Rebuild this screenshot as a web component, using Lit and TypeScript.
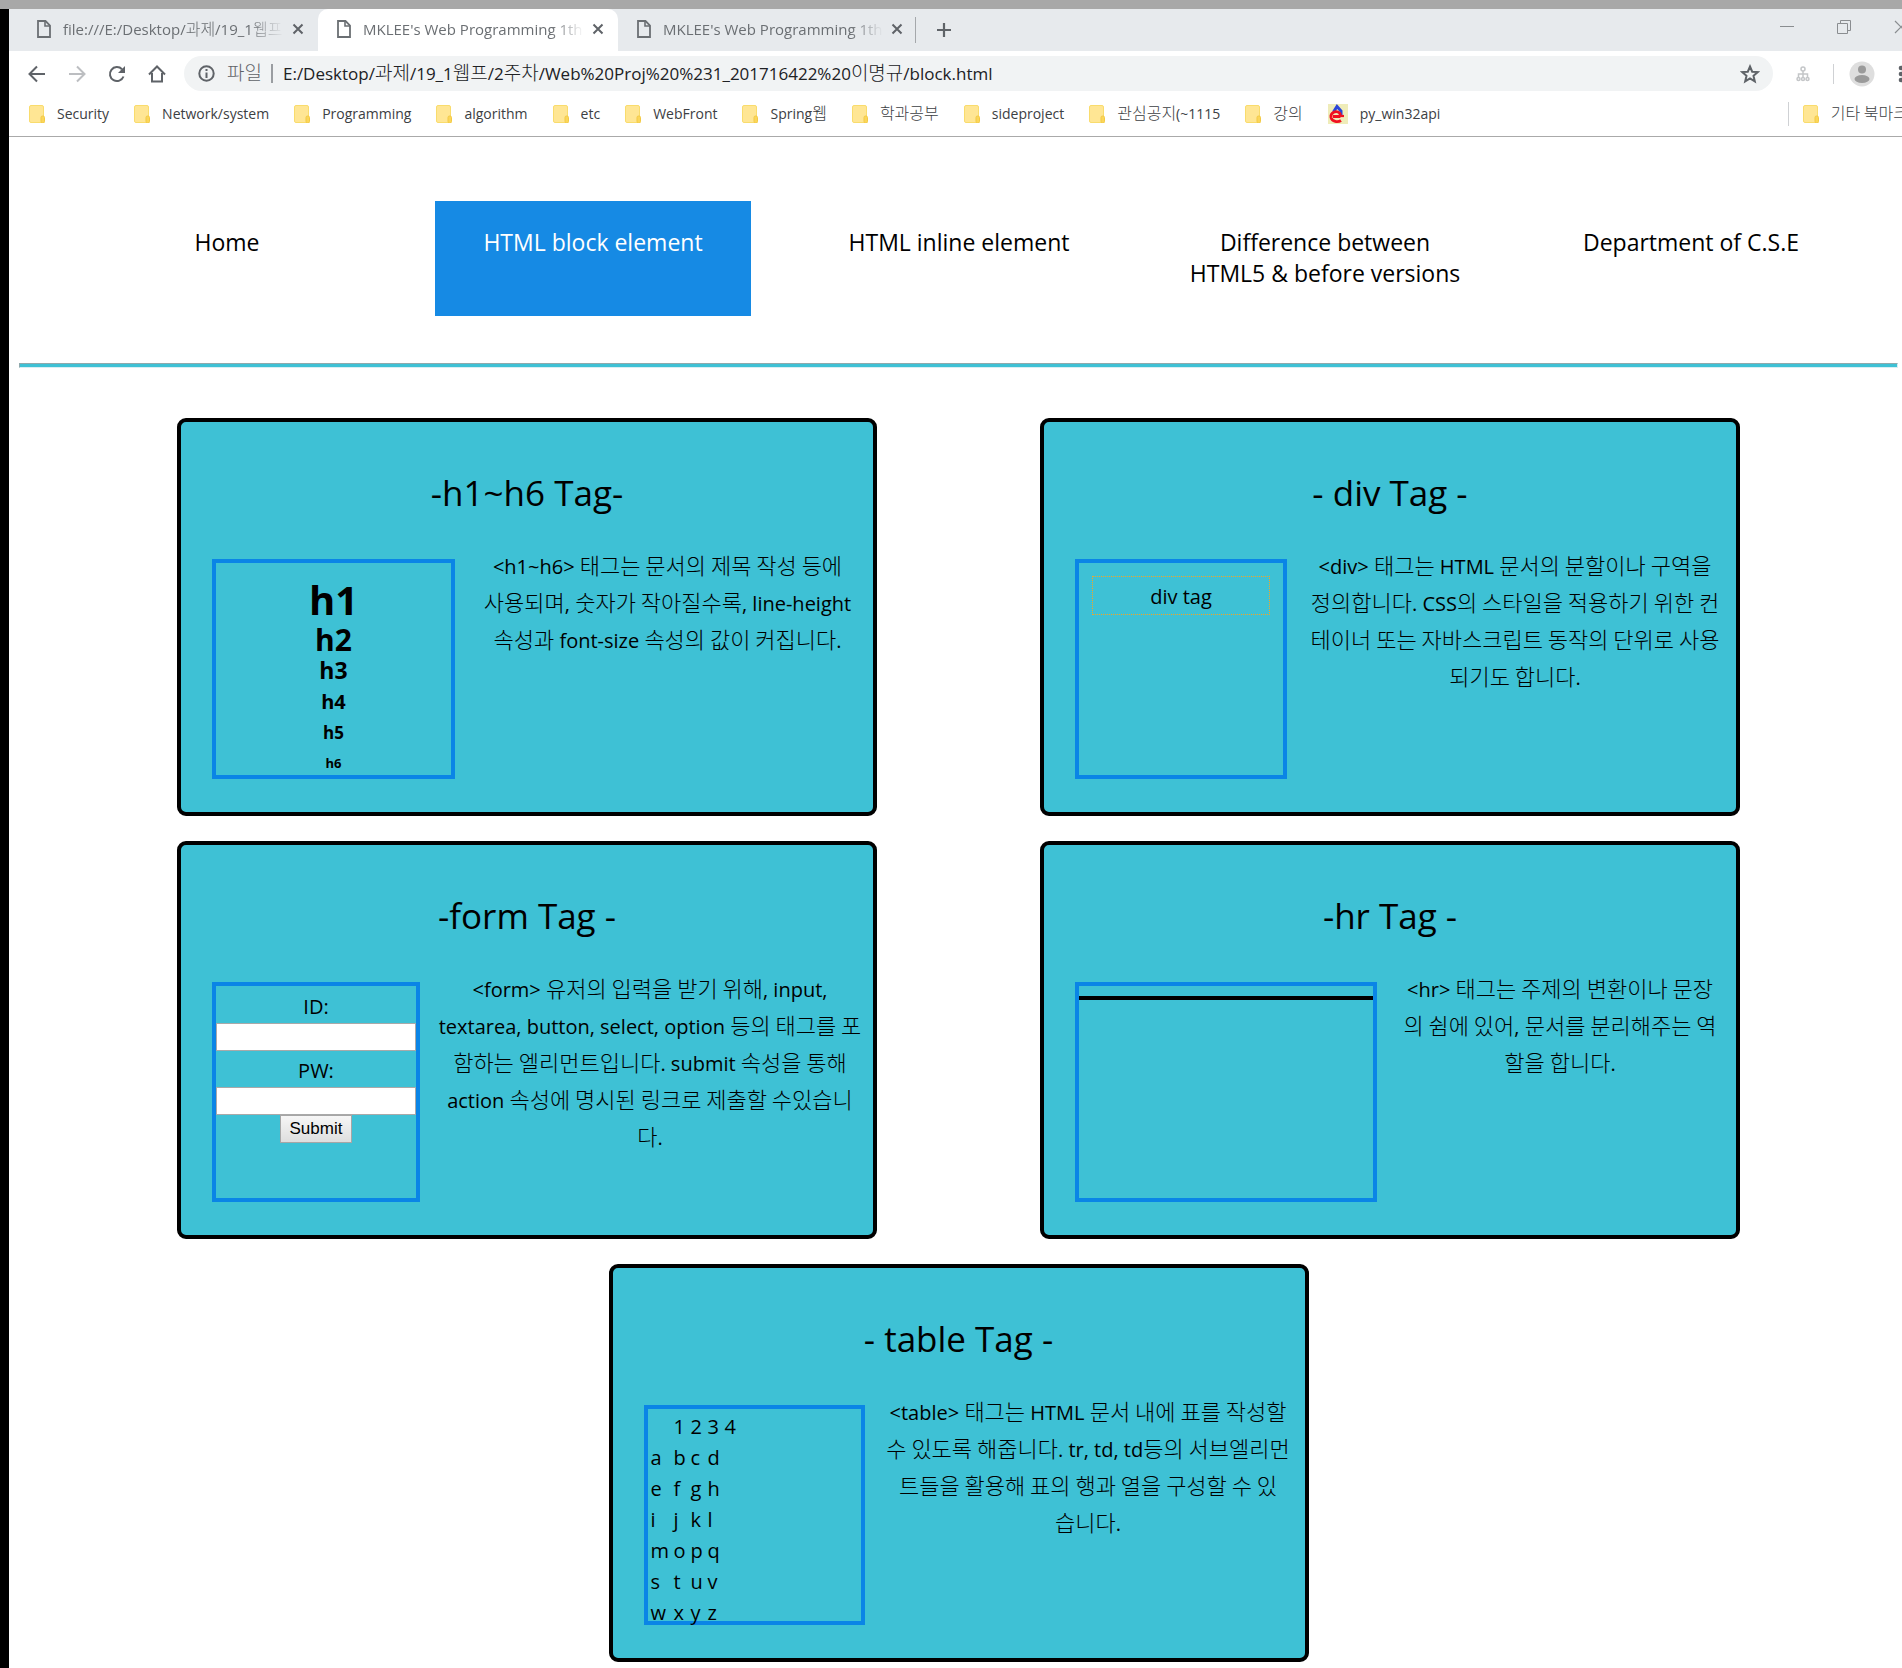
import { LitElement, html, svg, css, TemplateResult } from "lit";
import { customElement } from "lit/decorators.js";

const HANGUL = /([\u3131-\u318e\uac00-\ud7a3]+(?: +[\u3131-\u318e\uac00-\ud7a3]+)*)/;

/** Wraps Hangul runs so that they can be set slightly larger than Latin text. */
const mixed = (text: string) =>
  text
    .split(HANGUL)
    .map((part) => (HANGUL.test(part) ? html`<span class="ko">${part}</span>` : part));

const icon = (w: number, h: number, body: TemplateResult) =>
  html`<svg width=${w} height=${h} viewBox="0 0 ${w} ${h}" fill="none" aria-hidden="true">${body}</svg>`;

const pageIcon = icon(14, 18, svg`<path d="M1 1h7.500l4.500 4.500V17H1z" stroke="currentColor" stroke-width="1.800"/><path d="M8 1v5h5" stroke="currentColor" stroke-width="1.600"/>`);
const closeIcon = icon(12, 12, svg`<path d="M1.500 1.500l9 9M10.500 1.500l-9 9" stroke="#5f6368" stroke-width="2"/>`);
const plusIcon = icon(16, 16, svg`<path d="M8 1v14M1 8h14" stroke="#5f6368" stroke-width="2.200"/>`);
const folderIcon = icon(16, 18, svg`<rect x="0.500" y="0.500" width="14" height="17" rx="1.500" fill="#ffe694" stroke="#f9dc6d"/><rect x="12" y="11" width="3.500" height="7" rx="1.500" fill="#fbd65a" stroke="#f3c944"/>`);
const pyIcon = icon(20, 20, svg`<rect width="20" height="20" fill="#efecb9"/><path d="M5.500 8L9 2.500 13 7v5" stroke="#2a45d8" stroke-width="3"/><path d="M13 16.500c-3 2-9 1.500-10-3-.8-5 5-7.500 8.500-4.500 1 1 1 3 0 3.500H5" stroke="#f01020" stroke-width="2.800"/><path d="M10 12h6" stroke="#f01020" stroke-width="2.200"/>`);

const BOOKMARKS = [
  "Security", "Network/system", "Programming", "algorithm", "etc", "WebFront",
  "Spring웹", "학과공부", "sideproject", "관심공지(~1115", "강의",
];

const TABS = [
  { title: "file:///E:/Desktop/과제/19_1웹프", active: false },
  { title: "MKLEE's Web Programming 1th", active: true },
  { title: "MKLEE's Web Programming 1th", active: false },
];

@customElement("browser-chrome")
export class BrowserChrome extends LitElement {
  static styles = css`
    :host {
      display: block;
      background: #fff;
      font-family: "Open Sans", "Noto Sans CJK KR", sans-serif;
      color: #3c4043;
      border-bottom: 1px solid #aaa;
    }
    button {
      border: 0;
      padding: 0;
      background: none;
      font: inherit;
      color: inherit;
      display: flex;
      align-items: center;
      justify-content: center;
      flex: none;
    }
    svg { display: block; flex: none; }
    a { color: inherit; text-decoration: none; }
    .ko { font-family: "Noto Sans CJK KR", sans-serif; font-weight: 300; line-height: 1; }
    .strip {
      display: flex;
      height: 42px;
      padding-left: 9px;
      background: #e7eaed;
      overflow: hidden;
    }
    .tab {
      box-sizing: border-box;
      display: flex;
      align-items: center;
      width: 300px;
      padding: 0 14px 2px 19px;
      font-size: 15px;
      line-height: 24px;
      color: #6b6f73;
    }
    .tab .ko { font-size: 16px; }
    .tab.active { background: #fff; border-radius: 10px 10px 0 0; }
    .tab.last { width: 298px; border-right: 1px solid #a5a8ab; margin: 8px 0; padding-right: 12px; }
    .tab-title {
      flex: 1;
      min-width: 0;
      margin: 0 8px 0 12px;
      white-space: nowrap;
      overflow: hidden;
      mask-image: linear-gradient(90deg, #000 85%, transparent);
    }
    .new-tab { width: 56px; }
    .window { display: flex; margin-left: auto; margin-right: -27px; height: 36px; }
    .window button { width: 57px; color: #8a8d90; }
    .toolbar {
      display: flex;
      align-items: center;
      height: 45px;
      padding-left: 8px;
      overflow: hidden;
      color: #5f6368;
    }
    .tool { width: 40px; height: 36px; }
    .faded { color: #bcbec1; }
    .omnibox {
      flex: 1;
      min-width: 0;
      display: flex;
      align-items: center;
      height: 35px;
      margin-left: 7px;
      padding: 0 13px 0 14px;
      border-radius: 18px;
      background: #f1f3f4;
      font-size: 17px;
      line-height: 28px;
      white-space: nowrap;
    }
    .omnibox .ko { font-size: 19px; }
    .scheme { margin-left: 12px; padding-right: 9px; }
    .rule { width: 2px; height: 19px; background: #9a9da1; margin-right: 10px; }
    .url { flex: 1; min-width: 0; overflow: hidden; color: #202124; }
    .ext { width: 60px; }
    .bar { width: 1px; height: 20px; background: #cfd1d4; }
    .profile { width: 55px; }
    .menu { width: 24px; margin-right: -11px; }
    .bookmarks {
      display: flex;
      align-items: center;
      gap: 25px;
      height: 36px;
      padding: 0 0 4px 20px;
      overflow: hidden;
      font-size: 14px;
      line-height: 24px;
      white-space: nowrap;
    }
    .bookmarks .ko { font-size: 16px; }
    .bookmark { display: flex; align-items: center; gap: 12px; flex: none; }
    .others { margin-left: auto; margin-right: -6px; padding-left: 14px; border-left: 1px solid #cfd1d4; }
  `;

  render() {
    return html`
      <div class="strip">
        ${TABS.map(
          (t, i) => html`<div class="tab ${t.active ? "active" : ""} ${i === TABS.length - 1 ? "last" : ""}">
            ${pageIcon}<span class="tab-title">${mixed(t.title)}</span>
            <button aria-label="Close tab">${closeIcon}</button>
          </div>`
        )}
        <button class="new-tab" aria-label="New tab">${plusIcon}</button>
        <div class="window">
          <button aria-label="Minimize">${icon(14, 14, svg`<path d="M0 6.500h14" stroke="currentColor"/>`)}</button>
          <button aria-label="Restore">${icon(14, 14, svg`<path d="M.5 3.500h10v10H.5zM3.500 3V.5h10v10H11" stroke="currentColor"/>`)}</button>
          <button aria-label="Close">${icon(14, 14, svg`<path d="M1 1l12 12M13 1L1 13" stroke="currentColor" stroke-width="1.200"/>`)}</button>
        </div>
      </div>
      <div class="toolbar">
        <button class="tool" aria-label="Back">${icon(18, 18, svg`<path d="M17 9H2M9 1.500L1.500 9 9 16.500" stroke="currentColor" stroke-width="2"/>`)}</button>
        <button class="tool faded" aria-label="Forward">${icon(18, 18, svg`<path d="M1 9h15M9 1.500L16.500 9 9 16.500" stroke="currentColor" stroke-width="2"/>`)}</button>
        <button class="tool" aria-label="Reload">${icon(18, 18, svg`<path d="M15.500 11.500A7 7 0 1 1 14 4.200" stroke="currentColor" stroke-width="2"/><path d="M17 1v7h-7z" fill="currentColor"/>`)}</button>
        <button class="tool" aria-label="Home">${icon(18, 18, svg`<path d="M1 9.500L9 1.500l8 8M4 8v8.500h10V8" stroke="currentColor" stroke-width="2"/>`)}</button>
        <div class="omnibox">
          ${icon(17, 17, svg`<circle cx="8.500" cy="8.500" r="7.200" stroke="currentColor" stroke-width="2"/><path d="M8.500 7.500V13M8.500 4v2" stroke="currentColor" stroke-width="2"/>`)}
          <span class="scheme">${mixed("파일")}</span><span class="rule"></span>
          <span class="url">${mixed("E:/Desktop/과제/19_1웹프/2주차/Web%20Proj%20%231_201716422%20이명규/block.html")}</span>
          <button aria-label="Bookmark this page">${icon(20, 20, svg`<path d="M10 2.500l2.200 5.200 5.500.4-4.200 3.700 1.300 5.500L10 14.400l-4.800 2.900 1.300-5.500L2.300 8.100l5.500-.4z" stroke="currentColor" stroke-width="2"/>`)}</button>
        </div>
        <button class="ext" aria-label="Extension">${icon(14, 16, svg`<g stroke="#c4c6c8" stroke-width="1.500"><circle cx="7" cy="3" r="2"/><path d="M7 5v6M2.500 11V8h9v3"/><circle cx="2.500" cy="13" r="1.500"/><circle cx="7" cy="13" r="1.500"/><circle cx="11.500" cy="13" r="1.500"/></g>`)}</button>
        <span class="bar"></span>
        <button class="profile" aria-label="Profile">${icon(26, 26, svg`<circle cx="13" cy="13" r="12.500" fill="#dedede"/><circle cx="13" cy="8.500" r="4" fill="#9a9a9a"/><ellipse cx="13" cy="18" rx="7.500" ry="4" fill="#9a9a9a"/>`)}</button>
        <button class="menu" aria-label="Menu">${icon(6, 18, svg`<g fill="currentColor"><circle cx="3" cy="3" r="2.300"/><circle cx="3" cy="9" r="2.300"/><circle cx="3" cy="15" r="2.300"/></g>`)}</button>
      </div>
      <div class="bookmarks">
        ${BOOKMARKS.map((b) => html`<a class="bookmark" href="#">${folderIcon}<span>${mixed(b)}</span></a>`)}
        <a class="bookmark" href="#">${pyIcon}<span>py_win32api</span></a>
        <a class="bookmark others" href="#">${folderIcon}<span>${mixed("기타 북마크")}</span></a>
      </div>
    `;
  }
}

interface Card {
  kind: string;
  title: string;
  demo: TemplateResult;
  lines: string[];
}

const TABLE_ROWS = ["abcd", "efgh", "ijkl", "mopq", "stuv", "wxyz"];

const CARDS: Card[] = [
  {
    kind: "headings",
    title: "-h1~h6 Tag-",
    demo: html`<h1>h1</h1><h2>h2</h2><h3>h3</h3><h4>h4</h4><h5>h5</h5><h6>h6</h6>`,
    lines: ["<h1~h6> 태그는 문서의 제목 작성 등에", "사용되며, 숫자가 작아질수록, line-height", "속성과 font-size 속성의 값이 커집니다."],
  },
  {
    kind: "division",
    title: "- div Tag -",
    demo: html`<div class="dotted">div tag</div>`,
    lines: ["<div> 태그는 HTML 문서의 분할이나 구역을", "정의합니다. CSS의 스타일을 적용하기 위한 컨", "테이너 또는 자바스크립트 동작의 단위로 사용", "되기도 합니다."],
  },
  {
    kind: "form",
    title: "-form Tag -",
    demo: html`<form @submit=${(e: Event) => e.preventDefault()}>
      <label for="user">ID:</label><input id="user" type="text" />
      <label for="pass">PW:</label><input id="pass" type="password" />
      <button class="submit">Submit</button>
    </form>`,
    lines: ["<form> 유저의 입력을 받기 위해, input,", "textarea, button, select, option 등의 태그를 포", "함하는 엘리먼트입니다. submit 속성을 통해", "action 속성에 명시된 링크로 제출할 수있습니", "다."],
  },
  {
    kind: "rule",
    title: "-hr Tag -",
    demo: html`<hr class="thick" />`,
    lines: ["<hr> 태그는 주제의 변환이나 문장", "의 쉼에 있어, 문서를 분리해주는 역", "할을 합니다."],
  },
  {
    kind: "table",
    title: "- table Tag -",
    demo: html`<table>
      <tr><td></td>${["1", "2", "3", "4"].map((n) => html`<th>${n}</th>`)}</tr>
      ${TABLE_ROWS.map((r) => html`<tr>${[...r].map((c) => html`<td>${c}</td>`)}</tr>`)}
    </table>`,
    lines: ["<table> 태그는 HTML 문서 내에 표를 작성할", "수 있도록 해줍니다. tr, td, td등의 서브엘리먼", "트들을 활용해 표의 행과 열을 구성할 수 있", "습니다."],
  },
];

@customElement("app-root")
export class AppRoot extends LitElement {
  static styles = css`
    :host {
      display: block;
      min-height: 100vh;
      box-sizing: border-box;
      border-top: 9px solid #a8a8a8;
      background: #fff;
      color: #000;
      font-family: "Open Sans", "Noto Sans CJK KR", sans-serif;
      overflow: hidden;
    }
    .frame { border-left: 9px solid #000; min-height: calc(100vh - 9px); }
    .ko { font-family: "Noto Sans CJK KR", sans-serif; font-weight: 300; font-size: 22px; line-height: 1; }
    .page { padding: 64px 4px 5px 10px; }
    .nav { display: grid; grid-template-columns: repeat(5, 1fr); gap: 50px; padding: 0 49px 0 50px; }
    .nav a {
      box-sizing: border-box;
      min-height: 115px;
      padding: 26px 4px;
      text-align: center;
      font-size: 23px;
      line-height: 31px;
      color: #000;
      text-decoration: none;
    }
    .nav a.current { background: #168ae4; color: #fff; }
    .divider {
      height: 3px;
      margin: 47px 0 50px;
      border: 1px solid #8fa9ad;
      border-color: #8fa9ad #d8eef2 #d8eef2 #8fa9ad;
      background: #3ec1d5;
    }
    .cards { display: flex; flex-wrap: wrap; justify-content: center; gap: 25px 163px; }
    .card {
      box-sizing: border-box;
      flex: 0 1 700px;
      min-width: 0;
      min-height: 398px;
      border: 4px solid #000;
      border-radius: 9px;
      background: #3ec1d5;
    }
    .title {
      margin: 0;
      padding: 47px 0 42px;
      text-align: center;
      font-size: 35px;
      line-height: 48px;
      font-weight: 400;
    }
    .body { display: flex; align-items: flex-start; gap: 18px; padding: 0 11px 30px 31px; margin-top: -11px; }
    .demo {
      box-sizing: border-box;
      flex: none;
      height: 220px;
      margin-top: 11px;
      border: 4px solid #0a85e6;
      text-align: center;
      font-size: 20px;
    }
    .headings { width: 243px; }
    .division { width: 212px; }
    .form { width: 208px; padding-top: 1px; }
    .rule { width: 302px; }
    .table { width: 221px; }
    .text { flex: 1; min-width: 0; margin: 0; text-align: center; font-size: 20px; line-height: 37px; white-space: nowrap; }
    .line { display: block; height: 37px; }
    .demo h1, .demo h2, .demo h3, .demo h4, .demo h5, .demo h6 { margin: 0; line-height: 31px; font-weight: 700; }
    .demo h1 { font-size: 40px; line-height: 48px; padding-top: 13px; }
    .demo h2 { font-size: 30px; }
    .demo h3 { font-size: 23px; }
    .demo h4 { font-size: 20px; }
    .demo h5 { font-size: 17px; }
    .demo h6 { font-size: 13px; }
    .dotted { margin: 13px; padding: 4px 0 2px; border: 1px dotted #f5a623; line-height: 31px; }
    label { display: block; padding-top: 3px; line-height: 33px; }
    input {
      display: block;
      box-sizing: border-box;
      width: 100%;
      height: 28px;
      padding: 0 4px;
      border: 1px solid #a9a9a9;
      background: #fff;
      font: 17px "Liberation Sans", sans-serif;
    }
    .submit {
      display: block;
      margin: 0 auto;
      width: 72px;
      height: 28px;
      padding: 0;
      border: 1px solid #a6a6a6;
      background: linear-gradient(#f6f6f6, #dedede);
      font: 17px "Liberation Sans", sans-serif;
      color: #000;
    }
    .thick { height: 4px; margin: 10px 0 0; border: 0; background: #000; }
    table { border-collapse: collapse; margin: 2px 0 0 3px; text-align: left; }
    td, th { padding: 0; width: 17px; height: 31px; line-height: 31px; font-weight: 400; text-align: left; }
    td:first-child { width: 23px; }
  `;

  render() {
    return html`
      <div class="frame">
        <browser-chrome></browser-chrome>
        <main class="page">
          <nav class="nav">
            <a href="#">Home</a>
            <a href="#" class="current" aria-current="page">HTML block element</a>
            <a href="#">HTML inline element</a>
            <a href="#">Difference between<br />HTML5 &amp; before versions</a>
            <a href="#">Department of C.S.E</a>
          </nav>
          <hr class="divider" />
          <div class="cards">
            ${CARDS.map(
              (c) => html`<section class="card">
                <h2 class="title">${c.title}</h2>
                <div class="body">
                  <div class="demo ${c.kind}">${c.demo}</div>
                  <p class="text">${c.lines.map((l) => html`<span class="line">${mixed(l)}</span>`)}</p>
                </div>
              </section>`
            )}
          </div>
        </main>
      </div>
    `;
  }
}
